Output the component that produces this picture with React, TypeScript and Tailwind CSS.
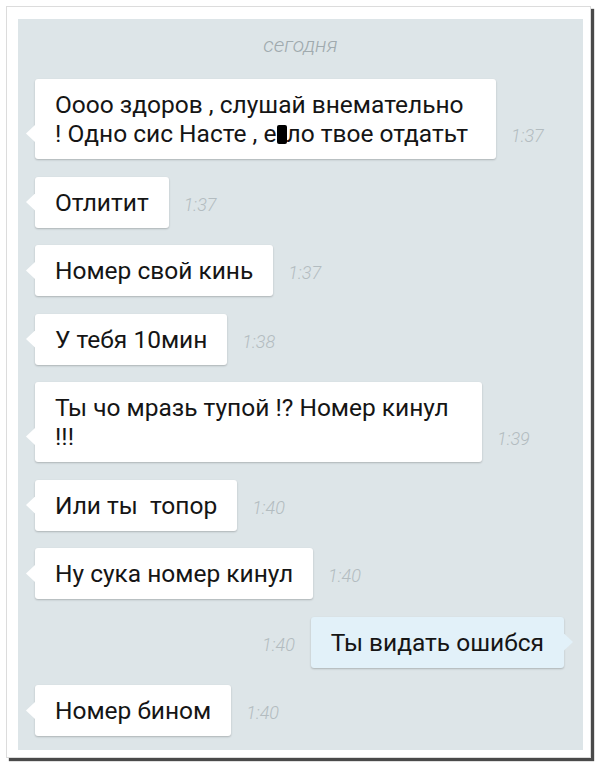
import type { ReactNode } from 'react'

const FONT = { fontFamily: 'Roboto, "Noto Sans", "Liberation Sans", sans-serif' }

type Msg = { id: number; out?: boolean; time: string; body: ReactNode; width?: string }

const MESSAGES: Msg[] = [
  {
    id: 1,
    time: '1:37',
    width: 'w-[461px]',
    body: (
      <>
        Оооо здоров , слушай внемательно
        <br />! Одно сис Насте , е
        <span className="inline-block h-[19px] w-[10px] translate-y-[2px] rounded-[2px] bg-black" />
        ло твое отдатьт
      </>
    ),
  },
  { id: 2, time: '1:37', body: 'Отлитит' },
  { id: 3, time: '1:37', body: 'Номер свой кинь' },
  { id: 4, time: '1:38', body: 'У тебя 10мин' },
  {
    id: 5,
    time: '1:39',
    width: 'w-[447px]',
    body: (
      <>
        Ты чо мразь тупой !? Номер кинул
        <br />
        !!!
      </>
    ),
  },
  { id: 6, time: '1:40', body: 'Или ты\u00a0 топор' },
  { id: 7, time: '1:40', body: 'Ну сука номер кинул' },
  { id: 8, out: true, time: '1:40', body: 'Ты видать ошибся' },
  { id: 9, time: '1:40', body: 'Номер бином' },
]

function Time({ t }: { t: string }) {
  return <span className="mb-[14px] text-[18px] font-light italic leading-none text-[#b3bcc0]">{t}</span>
}

function Bubble({ msg }: { msg: Msg }) {
  return (
    <div
      className={`relative shrink-0 rounded-[3px] px-[20px] py-[11px] text-[24.5px] leading-[29px] text-[#151515] shadow-[0_1px_2px_rgba(0,0,0,0.22)] ${
        msg.out ? 'bg-[#e2f1f9]' : 'bg-white'
      } ${msg.width ?? ''}`}
    >
      {msg.out ? (
        <span className="absolute bottom-[17px] right-[-9px] h-[17px] w-[9px] bg-[#e2f1f9] [clip-path:polygon(0_0,100%_50%,0_100%)]" />
      ) : (
        <span className="absolute bottom-[17px] left-[-9px] h-[17px] w-[9px] bg-white [clip-path:polygon(100%_0,0_50%,100%_100%)]" />
      )}
      {msg.body}
    </div>
  )
}

export default function App() {
  return (
    <div className="min-h-screen bg-white pl-[6px] pt-[6px]" style={FONT}>
      <div className="h-[752px] w-[585px] border border-[#dcdcdc] bg-white pb-[7px] pl-[11px] pr-[7px] pt-[12px] shadow-[3px_3px_1px_#4a4a4a]">
        <div className="flex h-full flex-col bg-[#dde5e8]">
          <div className="pt-[14px] text-center text-[21px] font-light italic leading-[24px] text-[#a0aaae]">
            сегодня
          </div>
          <div className="mt-[22px] flex flex-col gap-[17.5px] pl-[17px] pr-[19px]">
            {MESSAGES.map((m) =>
              m.out ? (
                <div key={m.id} className="flex items-end justify-end gap-[16px]">
                  <Time t={m.time} />
                  <Bubble msg={m} />
                </div>
              ) : (
                <div key={m.id} className="flex items-end gap-[15px]">
                  <Bubble msg={m} />
                  <Time t={m.time} />
                </div>
              ),
            )}
          </div>
        </div>
      </div>
    </div>
  )
}
